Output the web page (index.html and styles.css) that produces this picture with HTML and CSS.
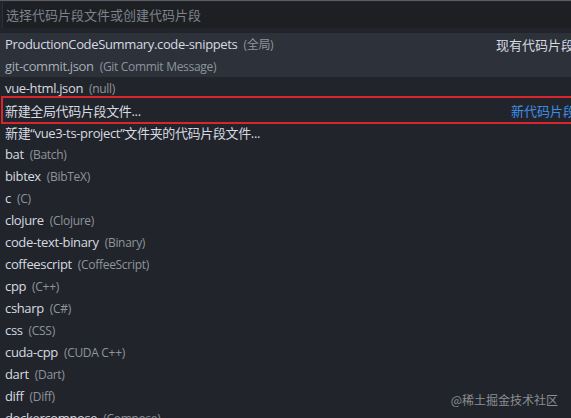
FILE: index.html
```html
<!DOCTYPE html>
<html lang="zh-CN">
<head>
    <meta charset="UTF-8">
    <meta name="viewport" content="width=device-width, initial-scale=1.0">
    <title>选择代码片段文件</title>
    <link rel="stylesheet" href="styles.css">
</head>
<body>
    <div class="quick-pick">
        <div class="input-row">
            <input type="text" class="pick-input" placeholder="选择代码片段文件或创建代码片段">
        </div>
        <div class="pick-list">
            <div class="pick-group focused">
                <div class="pick-item">
                    <span class="label">ProductionCodeSummary.code-snippets</span>
                    <span class="desc">(全局)</span>
                    <span class="group-label">现有代码片段</span>
                </div>
                <div class="pick-item muted">
                    <span class="label">git-commit.json</span>
                    <span class="desc">(Git Commit Message)</span>
                </div>
            </div>
            <div class="pick-item">
                <span class="label">vue-html.json</span>
                <span class="desc">(null)</span>
            </div>
            <div class="pick-item marked">
                <span class="label">新建全局代码片段文件...</span>
                <span class="group-label blue">新代码片段</span>
            </div>
            <div class="pick-item">
                <span class="label">新建“vue3-ts-project”文件夹的代码片段文件...</span>
            </div>
            <div class="pick-item"><span class="label">bat</span><span class="desc">(Batch)</span></div>
            <div class="pick-item"><span class="label">bibtex</span><span class="desc">(BibTeX)</span></div>
            <div class="pick-item"><span class="label">c</span><span class="desc">(C)</span></div>
            <div class="pick-item"><span class="label">clojure</span><span class="desc">(Clojure)</span></div>
            <div class="pick-item"><span class="label">code-text-binary</span><span class="desc">(Binary)</span></div>
            <div class="pick-item"><span class="label">coffeescript</span><span class="desc">(CoffeeScript)</span></div>
            <div class="pick-item"><span class="label">cpp</span><span class="desc">(C++)</span></div>
            <div class="pick-item"><span class="label">csharp</span><span class="desc">(C#)</span></div>
            <div class="pick-item"><span class="label">css</span><span class="desc">(CSS)</span></div>
            <div class="pick-item"><span class="label">cuda-cpp</span><span class="desc">(CUDA C++)</span></div>
            <div class="pick-item"><span class="label">dart</span><span class="desc">(Dart)</span></div>
            <div class="pick-item"><span class="label">diff</span><span class="desc">(Diff)</span></div>
            <div class="pick-item"><span class="label">dockercompose</span><span class="desc">(Compose)</span></div>
        </div>
        <div class="watermark">@稀土掘金技术社区</div>
    </div>
</body>
</html>
```

FILE: styles.css
```css
body, html {
    margin: 0;
    padding: 0;
    background-color: #21252b;
    font-family: 'Open Sans', 'Noto Sans CJK SC', sans-serif;
    overflow: hidden;
}
.quick-pick {
    position: relative;
    width: 571px;
    height: 418px;
    overflow: hidden;
    border-top: 1px solid #5a5d63;
}
.input-row {
    padding: 1px 0 5px 2px;
}
.pick-input {
    display: block;
    box-sizing: border-box;
    width: 100%;
    height: 26px;
    padding: 0 3px;
    border: none;
    border-left: 1px solid #2d3036;
    background-color: #1d1f23;
    color: #d7dae0;
    font-family: 'Open Sans', 'Noto Sans CJK SC', sans-serif;
    font-size: 13px;
    outline: none;
}
.pick-input::placeholder {
    color: #7f848e;
}
.pick-group.focused {
    background-color: #2c313a;
}
.pick-item {
    display: flex;
    align-items: center;
    height: 22px;
    padding: 0 5px;
    white-space: nowrap;
    color: #d7dae0;
    font-size: 13px;
}
.pick-item .label {
    letter-spacing: -0.35px;
}
.pick-item.muted .label {
    color: #a9adb5;
}
.pick-item .desc {
    margin-left: 6px;
    color: #8f949c;
    font-size: 12px;
    letter-spacing: -0.3px;
}
.pick-item .group-label {
    margin-left: auto;
    margin-right: -8px;
    color: #d7dae0;
}
.pick-item .group-label.blue {
    color: #3f8fe8;
}
.pick-item.marked {
    box-sizing: border-box;
    height: 28px;
    margin: -3px -4px -3px 1px;
    padding-left: 2px;
    border: 2px solid #d9262d;
}
.watermark {
    position: absolute;
    right: 13px;
    bottom: 11px;
    color: #8b8e93;
    font-size: 12px;
    font-family: 'Noto Sans CJK SC', sans-serif;
}
```
